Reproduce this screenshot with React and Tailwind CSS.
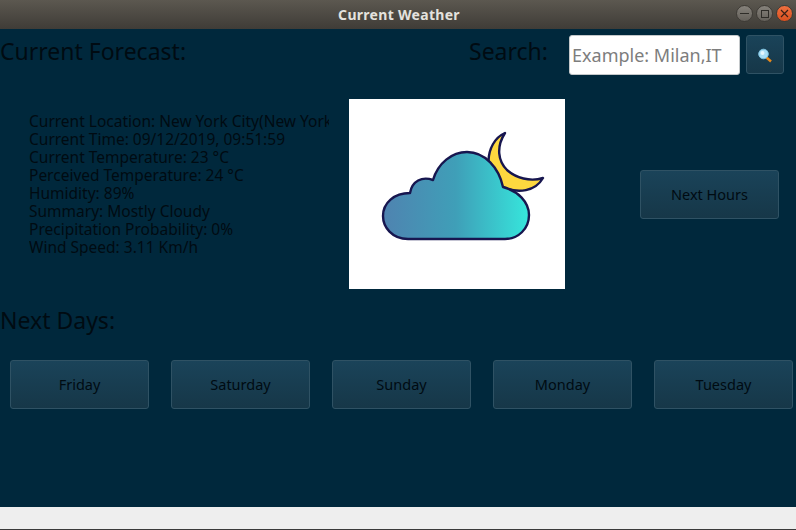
function Btn({ children }) {
  return (
    <button className="h-[49px] w-[139px] shrink-0 rounded-[3px] border border-[#2f5264] bg-gradient-to-b from-[#1a4359] to-[#163748] pt-px text-[14.5px] text-[#000b12]">
      {children}
    </button>
  );
}
function WinBtn({ className = "", children }) {
  return (
    <div className={"flex h-[17px] w-[17px] items-center justify-center rounded-full border border-[#3e3b36] " + className}>
      {children}
    </div>
  );
}
const lines = [
  "Current Location: New York City(New York)",
  "Current Time: 09/12/2019, 09:51:59",
  "Current Temperature: 23 °C",
  "Perceived Temperature: 24 °C",
  "Humidity: 89%",
  "Summary: Mostly Cloudy",
  "Precipitation Probability: 0%",
  "Wind Speed: 3.11 Km/h",
];
export default function App() {
  return (
    <div className="flex h-[530px] w-[796px] flex-col overflow-hidden bg-[#eeeeee] font-['Noto_Sans',sans-serif]">
      <div className="relative flex h-[29px] shrink-0 items-center justify-center bg-gradient-to-b from-[#5c5850] to-[#3f3c37] pb-px">
        <span className="ml-[2px] text-[14px] font-bold tracking-[0.3px] text-[#e4e2de]">Current Weather</span>
        <div className="absolute right-[3px] top-[5px] flex gap-[3px]">
          <WinBtn className="bg-gradient-to-b from-[#86827b] to-[#64605a]">
            <div className="h-[1px] w-[9px] bg-[#2e2c28]" />
          </WinBtn>
          <WinBtn className="bg-gradient-to-b from-[#86827b] to-[#64605a]">
            <div className="h-[8px] w-[8px] border border-[#2e2c28]" />
          </WinBtn>
          <WinBtn className="bg-gradient-to-b from-[#f0703f] to-[#d9501f]">
            <svg width="9" height="9" viewBox="0 0 9 9"><path d="M1 1L8 8M8 1L1 8" stroke="#3b2016" strokeWidth="1.2" /></svg>
          </WinBtn>
        </div>
      </div>
      <div className="flex h-[478px] shrink-0 flex-col bg-[#00283c] text-[#000b12]">
        <div className="flex h-[46px] items-start pt-[6px]">
          <h2 className="w-[469px] text-[23px] leading-[32px]">Current Forecast:</h2>
          <span className="w-[100px] text-[23px] leading-[32px]">Search:</span>
          <div className="h-[40px] w-[171px] rounded-[3px] border border-[#c4c8ca] bg-white pl-[2px] text-[18px] leading-[38px] text-[#7d7d7d]">Example: Milan,IT</div>
          <button className="ml-[6px] flex h-[39px] w-[38px] items-center justify-center rounded-[3px] border border-[#2f5264] bg-gradient-to-b from-[#1a4359] to-[#163748]">
            <svg width="16" height="16" viewBox="0 0 16 16">
              <path d="M9.5 10.5L14 14.5" stroke="#e8891c" strokeWidth="2.4" />
              <circle cx="6.5" cy="7" r="4.8" fill="#a9def5" stroke="#7cc0de" />
              <circle cx="5.5" cy="6" r="2" fill="#e4f6fd" />
            </svg>
          </button>
        </div>
        <div className="mt-[24px] flex h-[190px]">
          <div className="w-[349px] shrink-0 pl-[29px] pt-[12.5px]">
            <div className="w-[300px] overflow-hidden whitespace-nowrap text-[15.5px] leading-[18px]">
              {lines.map((l) => <div key={l}>{l}</div>)}
            </div>
          </div>
          <div className="h-[190px] w-[216px] shrink-0 bg-white pl-[21px] pt-[21px]">
            <svg width="180" height="130" viewBox="0 0 180 130">
              <defs>
                <linearGradient id="g" x1="0" x2="1" y1="0" y2="0">
                  <stop offset="0" stopColor="#4f83b0" />
                  <stop offset="0.5" stopColor="#3f9fb8" />
                  <stop offset="1" stopColor="#36e6dc" />
                </linearGradient>
              </defs>
              <path d="M135 13 C114 22 112 60 135 68 C148 73 165 72 173 58 C160 62 146 58 137 50 C128 41 126 27 135 13 Z" fill="#fdd83f" stroke="#17164f" strokeWidth="2.4" strokeLinejoin="round" />
              <path d="M38 119 C22 119 13 107 13 96 C13 83 24 73 40 73 C42 61 52 56 63 60 C68 43 82 32 97 32 C115 32 129 48 133 67 C148 71 159 82 159 95 C159 109 148 119 135 119 Z" fill="url(#g)" stroke="#17164f" strokeWidth="2.4" strokeLinejoin="round" />
            </svg>
          </div>
          <div className="flex-1 pl-[75px] pt-[71px]">
            <Btn>Next Hours</Btn>
          </div>
        </div>
        <h2 className="mt-[15px] h-[32px] text-[23px] leading-[32px]">Next Days:</h2>
        <div className="mt-[24px] flex gap-[22px] pl-[10px]">
          <Btn>Friday</Btn>
          <Btn>Saturday</Btn>
          <Btn>Sunday</Btn>
          <Btn>Monday</Btn>
          <Btn>Tuesday</Btn>
        </div>
      </div>
      <div className="flex-1" />
      <div className="h-px shrink-0 bg-[#3a3a3a]" />
    </div>
  );
}
